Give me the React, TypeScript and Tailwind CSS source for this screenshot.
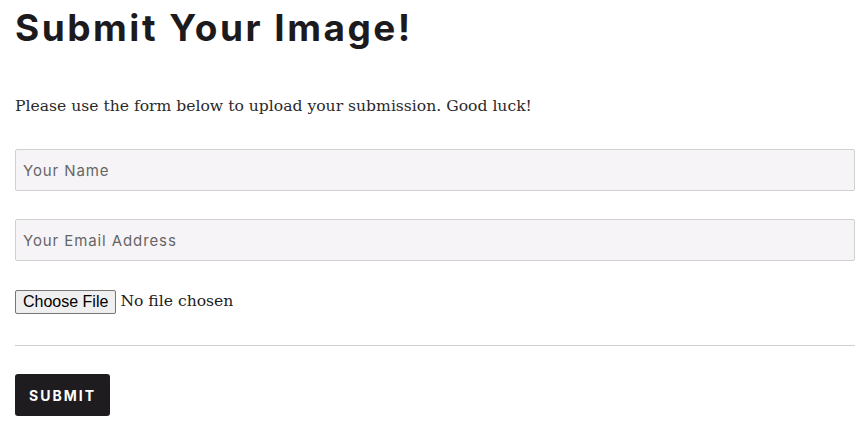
import React from 'react';

function App() {
  return (
    <div className="min-h-screen bg-white px-[15px] pt-[6px] w-[866px]">
      <h1 className="text-[37px] leading-[44px] font-bold text-[#1c1a1c] tracking-[2.5px] font-['Inter',sans-serif]">
        Submit Your Image!
      </h1>
      <p className="mt-[44px] text-[15.6px] leading-[24px] text-[#2a2a2a] font-['DejaVu_Serif',serif]">
        Please use the form below to upload your submission. Good luck!
      </p>
      <form className="mt-[31px] w-[840px]">
        <input
          type="text"
          placeholder="Your Name"
          className="block w-full h-[42px] px-[7px] bg-[#f6f4f6] border border-[#d0d0d0] rounded-[2px] text-[15px] tracking-[0.9px] text-[#555] placeholder:text-[#666] font-['Inter',sans-serif] outline-none"
        />
        <input
          type="email"
          placeholder="Your Email Address"
          className="mt-[28px] block w-full h-[42px] px-[7px] bg-[#f6f4f6] border border-[#d0d0d0] rounded-[2px] text-[15px] tracking-[0.9px] text-[#555] placeholder:text-[#666] font-['Inter',sans-serif] outline-none"
        />
        <div className="mt-[29px] flex items-center gap-[4px]">
          <button
            type="button"
            className="h-[24px] px-[7px] bg-[#efefef] border border-[#767676] rounded-[2px] text-[16px] leading-none text-black font-['Liberation_Sans',sans-serif]"
          >
            Choose File
          </button>
          <span className="text-[15.6px] text-[#222] font-['DejaVu_Serif',serif]">No file chosen</span>
        </div>
        <hr className="mt-[31px] border-t border-[#cfcfcf]" />
        <button
          type="submit"
          className="mt-[28px] h-[42px] px-[14px] bg-[#1e1c1e] rounded-[3px] text-white text-[14px] font-bold tracking-[2px] font-['Inter',sans-serif]"
        >
          SUBMIT
        </button>
      </form>
    </div>
  );
}

export default App;
